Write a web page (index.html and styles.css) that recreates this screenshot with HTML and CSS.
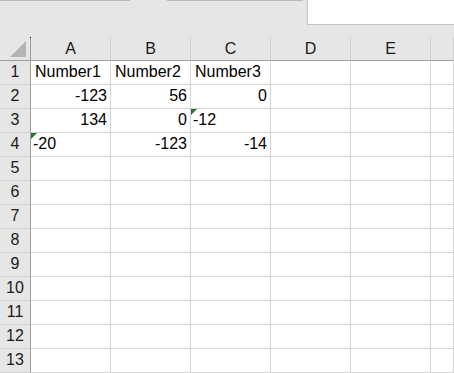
FILE: index.html
```html
<!DOCTYPE html>
<html lang="en">
<head>
    <meta charset="UTF-8">
    <title>Sheet1</title>
    <link rel="stylesheet" href="styles.css">
</head>
<body>
    <div class="ribbon">
        <div class="tab tab-one"></div>
        <div class="tab tab-two"></div>
        <div class="namebox"></div>
    </div>
    <div class="sheet">
        <div class="corner"><span class="corner-mark"></span></div>
        <div class="col-head">A</div>
        <div class="col-head">B</div>
        <div class="col-head">C</div>
        <div class="col-head">D</div>
        <div class="col-head">E</div>
        <div class="col-head"></div>

        <div class="row-head">1</div>
        <div class="cell">Number1</div>
        <div class="cell">Number2</div>
        <div class="cell">Number3</div>
        <div class="cell"></div><div class="cell"></div><div class="cell"></div>

        <div class="row-head">2</div>
        <div class="cell num">-123</div>
        <div class="cell num">56</div>
        <div class="cell num">0</div>
        <div class="cell"></div><div class="cell"></div><div class="cell"></div>

        <div class="row-head">3</div>
        <div class="cell num">134</div>
        <div class="cell num">0</div>
        <div class="cell flagged">-12</div>
        <div class="cell"></div><div class="cell"></div><div class="cell"></div>

        <div class="row-head">4</div>
        <div class="cell flagged">-20</div>
        <div class="cell num">-123</div>
        <div class="cell num">-14</div>
        <div class="cell"></div><div class="cell"></div><div class="cell"></div>

        <div class="row-head">5</div>
        <div class="cell"></div><div class="cell"></div><div class="cell"></div><div class="cell"></div><div class="cell"></div><div class="cell"></div>
        <div class="row-head">6</div>
        <div class="cell"></div><div class="cell"></div><div class="cell"></div><div class="cell"></div><div class="cell"></div><div class="cell"></div>
        <div class="row-head">7</div>
        <div class="cell"></div><div class="cell"></div><div class="cell"></div><div class="cell"></div><div class="cell"></div><div class="cell"></div>
        <div class="row-head">8</div>
        <div class="cell"></div><div class="cell"></div><div class="cell"></div><div class="cell"></div><div class="cell"></div><div class="cell"></div>
        <div class="row-head">9</div>
        <div class="cell"></div><div class="cell"></div><div class="cell"></div><div class="cell"></div><div class="cell"></div><div class="cell"></div>
        <div class="row-head">10</div>
        <div class="cell"></div><div class="cell"></div><div class="cell"></div><div class="cell"></div><div class="cell"></div><div class="cell"></div>
        <div class="row-head">11</div>
        <div class="cell"></div><div class="cell"></div><div class="cell"></div><div class="cell"></div><div class="cell"></div><div class="cell"></div>
        <div class="row-head">12</div>
        <div class="cell"></div><div class="cell"></div><div class="cell"></div><div class="cell"></div><div class="cell"></div><div class="cell"></div>
        <div class="row-head">13</div>
        <div class="cell"></div><div class="cell"></div><div class="cell"></div><div class="cell"></div><div class="cell"></div><div class="cell"></div>
    </div>
</body>
</html>
```

FILE: styles.css
```css
*,
*:before,
*:after {
    padding: 0;
    margin: 0;
    box-sizing: border-box;
}
body {
    width: 454px;
    height: 373px;
    overflow: hidden;
    background-color: #ffffff;
    font-family: 'Liberation Sans', Arial, sans-serif;
    font-size: 16px;
    color: #000000;
}
.ribbon {
    height: 37px;
    background-color: #e6e6e6;
    display: flex;
    align-items: flex-start;
}
.tab {
    height: 2px;
    border-top: 1px solid #b9b9b9;
}
.tab-one {
    width: 130px;
}
.tab-two {
    width: 136px;
    margin-left: 37px;
}
.namebox {
    width: 147px;
    height: 25px;
    margin-left: 4px;
    background-color: #ffffff;
    border-left: 1px solid #c6c6c6;
    border-bottom: 1px solid #c6c6c6;
}
.sheet {
    display: grid;
    grid-template-columns: 31px repeat(5, 80px) 1fr;
    grid-auto-rows: 24px;
}
.corner,
.col-head {
    background-color: #e6e6e6;
    border-bottom: 1px solid #9e9e9e;
    border-right: 1px solid #d0d0d0;
}
.corner {
    position: relative;
    border-right-color: #9e9e9e;
}
.corner:after {
    content: "";
    position: absolute;
    right: -1px;
    top: 0;
    width: 1px;
    height: 1px;
    background-color: #111111;
}
.corner-mark {
    position: absolute;
    left: 10px;
    top: 4px;
    width: 16px;
    height: 16px;
    background-color: #b4b4b4;
    clip-path: polygon(100% 0, 100% 100%, 0 100%);
}
.col-head {
    display: flex;
    justify-content: center;
    align-items: center;
    padding-top: 1px;
    color: #1a1a1a;
}
.row-head {
    background-color: #e6e6e6;
    border-right: 1px solid #9e9e9e;
    border-bottom: 1px solid #d0d0d0;
    display: flex;
    justify-content: center;
    align-items: flex-end;
    padding-bottom: 3px;
    color: #1a1a1a;
}
.cell {
    border-right: 1px solid #d4d4d4;
    border-bottom: 1px solid #d4d4d4;
    display: flex;
    align-items: flex-end;
    padding: 0 3px 3px 4px;
    white-space: nowrap;
}
.num {
    justify-content: flex-end;
}
.flagged {
    position: relative;
    padding-left: 2px;
}
.flagged:before {
    content: "";
    position: absolute;
    left: 0;
    top: 0;
    width: 6px;
    height: 6px;
    background-color: #1f7a1f;
    clip-path: polygon(0 0, 100% 0, 0 100%);
}
```
